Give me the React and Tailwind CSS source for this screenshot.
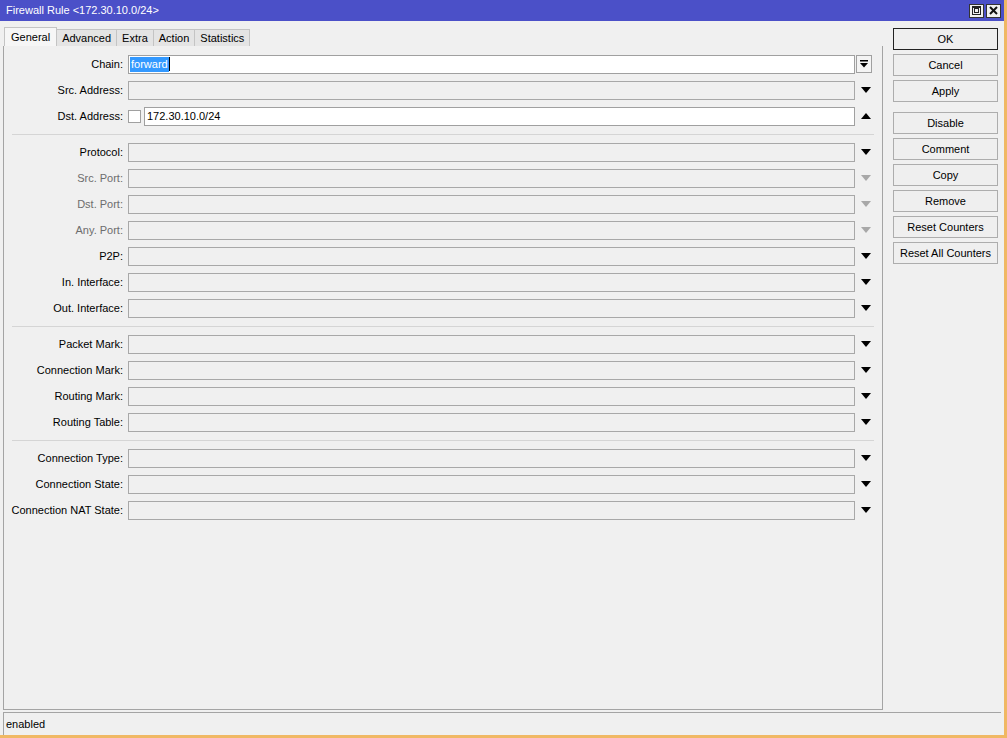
import React from 'react';

const rows1 = [
  { label: 'Chain', kind: 'chain' },
  { label: 'Src. Address' },
  { label: 'Dst. Address', kind: 'dst' },
];
const rows2 = [
  { label: 'Protocol' },
  { label: 'Src. Port', dim: true },
  { label: 'Dst. Port', dim: true },
  { label: 'Any. Port', dim: true },
  { label: 'P2P' },
  { label: 'In. Interface' },
  { label: 'Out. Interface' },
];
const rows3 = [
  { label: 'Packet Mark' },
  { label: 'Connection Mark' },
  { label: 'Routing Mark' },
  { label: 'Routing Table' },
];
const rows4 = [
  { label: 'Connection Type' },
  { label: 'Connection State' },
  { label: 'Connection NAT State' },
];

const tabs = ['General', 'Advanced', 'Extra', 'Action', 'Statistics'];

function Arrow({ up, dim }) {
  return (
    <svg width="10" height="6" viewBox="0 0 10 6" className={dim ? 'fill-[#a8a8a8]' : 'fill-black'}>
      {up ? <path d="M0 6 L5 0 L10 6 Z" /> : <path d="M0 0 L10 0 L5 6 Z" />}
    </svg>
  );
}

function Row({ label, kind, dim }) {
  return (
    <div className="flex h-[26px] items-center">
      <div className={`w-[119px] text-right whitespace-nowrap ${dim ? 'text-[#6d6d6d]' : 'text-black'}`}>{label}:</div>
      <div className="ml-[5px] flex w-[727px] items-center">
        {kind === 'dst' && (
          <div className="mr-[3px] h-[13px] w-[13px] shrink-0 border border-[#a0a0a0] bg-white" />
        )}
        {kind === 'chain' ? (
          <div className="flex h-[19px] flex-1 items-center border border-[#a0a0a0] bg-white pl-[1px]">
            <span className="bg-[#3399ff] px-[1px] leading-[15px] text-white">forward</span>
            <span className="h-[14px] w-px bg-black" />
          </div>
        ) : kind === 'dst' ? (
          <div className="flex h-[19px] flex-1 items-center border border-[#a0a0a0] bg-white pl-[2px]">172.30.10.0/24</div>
        ) : (
          <div className="h-[19px] flex-1 border border-[#a8a8a8] bg-[#f0f0f0]" />
        )}
      </div>
      {kind === 'chain' ? (
        <div className="ml-px flex h-[18px] w-[16px] items-center justify-center border border-[#a0a0a0] bg-[#f4f4f4]">
          <svg width="8" height="8" viewBox="0 0 8 8" className="fill-black">
            <rect x="0" y="0" width="8" height="1.5" />
            <path d="M0 3 L8 3 L4 7.5 Z" />
          </svg>
        </div>
      ) : (
        <div className="flex w-[20px] justify-center pl-[1px]">
          <Arrow up={kind === 'dst'} dim={dim} />
        </div>
      )}
    </div>
  );
}

function Separator() {
  return (
    <div className="flex h-[10px] items-center px-[8px]">
      <div className="h-px w-full bg-[#d5d5d5]" />
    </div>
  );
}

const buttons1 = ['OK', 'Cancel', 'Apply'];
const buttons2 = ['Disable', 'Comment', 'Copy', 'Remove', 'Reset Counters', 'Reset All Counters'];

function Btn({ text, main }) {
  return (
    <div
      className={`flex h-[22px] w-[105px] shrink-0 items-center justify-center border ${
        main ? 'border-[#222]' : 'border-[#adadad]'
      } bg-[#efefef]`}
    >
      {text}
    </div>
  );
}

export default function App() {
  return (
    <div className="h-[738px] w-[1007px] bg-[#f0b864] font-['Liberation_Sans',Arial,sans-serif] text-[11px] text-black">
      <div className="flex h-[735px] w-[1004px] flex-col bg-[#f0f0f0]">
        {/* title bar */}
        <div className="flex h-[21px] items-center bg-[#4b50c8] pl-[6px] pr-[3px] text-white">
          <span className="flex-1">Firewall Rule &lt;172.30.10.0/24&gt;</span>
          <div className="flex gap-[2px]">
            <div className="flex h-[14px] w-[15px] items-center justify-center border border-[#333] bg-[#f0f0f0]">
              <svg width="9" height="9" viewBox="0 0 9 9" fill="none" stroke="#222">
                <rect x="0.5" y="0.5" width="8" height="8" />
                <rect x="2.5" y="2.5" width="4" height="4" />
                <line x1="0.5" y1="1.5" x2="8.5" y2="1.5" />
              </svg>
            </div>
            <div className="flex h-[14px] w-[15px] items-center justify-center border border-[#333] bg-[#f0f0f0]">
              <svg width="9" height="9" viewBox="0 0 9 9" stroke="#111" strokeWidth="2">
                <line x1="1" y1="1" x2="8" y2="8" />
                <line x1="8" y1="1" x2="1" y2="8" />
              </svg>
            </div>
          </div>
        </div>

        <div className="flex min-h-0 flex-1 pt-[6px]">
          {/* tabs and form */}
          <div className="flex w-[883px] flex-col pl-[3px]">
            <div className="flex h-[19px] items-end pl-[1px]">
              {tabs.map((t, i) =>
                i === 0 ? (
                  <div key={t} className="flex h-[19px] items-center border border-b-0 border-[#c4c4c4] bg-[#f6f6f6] px-[6px]">
                    {t}
                  </div>
                ) : (
                  <div key={t} className="flex h-[17px] items-center border border-b-0 border-l-0 border-[#c4c4c4] bg-[#e4e4e4] px-[5px]">
                    {t}
                  </div>
                )
              )}
            </div>
            <div className="flex-1 border border-t-0 border-[#a4a4a4] pt-[5px]">
              {rows1.map((r) => <Row key={r.label} {...r} />)}
              <Separator />
              {rows2.map((r) => <Row key={r.label} {...r} />)}
              <Separator />
              {rows3.map((r) => <Row key={r.label} {...r} />)}
              <Separator />
              {rows4.map((r) => <Row key={r.label} {...r} />)}
            </div>
          </div>

          {/* action buttons */}
          <div className="flex flex-col gap-[4px] pl-[10px] pt-px">
            {buttons1.map((b) => <Btn key={b} text={b} main={b === 'OK'} />)}
            <div className="h-[2px]" />
            {buttons2.map((b) => <Btn key={b} text={b} />)}
          </div>
        </div>

        {/* status bar */}
        <div className="mx-[3px] mt-[2px] flex h-[23px] items-center border-l border-t border-[#a4a4a4] pl-[2px]">
          enabled
        </div>
      </div>
    </div>
  );
}
